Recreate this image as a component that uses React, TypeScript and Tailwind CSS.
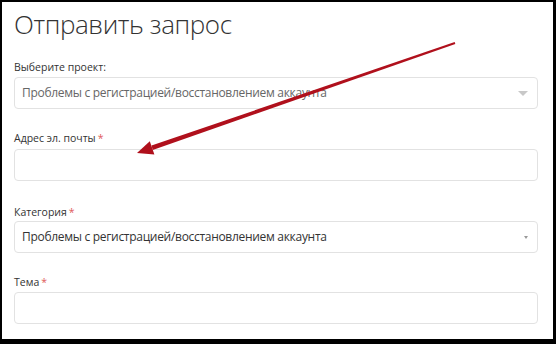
import React from "react"

const font = { fontFamily: '"Open Sans", "Noto Sans", sans-serif' }

function Label({ text, required }: { text: string; required?: boolean }) {
  return (
    <div className="text-[10.5px] leading-4 text-[#333]">
      {text}
      {required && <span className="ml-[2px] text-[#e05a5a]">*</span>}
    </div>
  )
}

function Select({ value, dark, small }: { value: string; dark?: boolean; small?: boolean }) {
  return (
    <div className="flex h-8 items-center justify-between rounded-[4px] border border-[#e2e2e2] bg-white pl-[7px] pr-[9px]">
      <span
        className={
          dark
            ? "text-[12px] tracking-[-0.3px] text-[#333]"
            : "text-[12px] tracking-[-0.3px] text-[#666]"
        }
      >
        {value}
      </span>
      {small ? (
        <span className="h-0 w-0 border-x-[2.5px] border-t-[3px] border-x-transparent border-t-[#999]" />
      ) : (
        <span className="h-0 w-0 border-x-[5px] border-t-[5px] border-x-transparent border-t-[#c8c8c8]" />
      )}
    </div>
  )
}

function Input() {
  return <div className="h-8 rounded-[4px] border border-[#e2e2e2] bg-white" />
}

export default function App() {
  return (
    <div className="h-[344px] w-[556px] bg-black pb-[5px] pl-[2px] pr-[3px] pt-[2px]" style={font}>
      <div className="relative h-full w-full overflow-hidden bg-white pl-3 pr-[15px]">
        <h1 className="pt-[3px] text-[26px] font-light leading-[38px] tracking-[-0.4px] text-[#333]">
          Отправить запрос
        </h1>
        <div className="mt-[16px]">
          <Label text="Выберите проект:" />
          <div className="mt-[2px]">
            <Select value="Проблемы с регистрацией/восстановлением аккаунта" />
          </div>
        </div>
        <div className="mt-[21px]">
          <Label text="Адрес эл. почты" required />
          <div className="mt-[3px]">
            <Input />
          </div>
        </div>
        <div className="mt-[23px]">
          <Label text="Категория" required />
          <div className="mt-[1px]">
            <Select value="Проблемы с регистрацией/восстановлением аккаунта" dark small />
          </div>
        </div>
        <div className="mt-[21px]">
          <Label text="Тема" required />
          <div className="mt-[2px]">
            <Input />
          </div>
        </div>

        <svg className="pointer-events-none absolute left-[-2px] top-[-2px]" width="556" height="344">
          <polygon points="455.3,44 454.7,42 151.5,145.6 152.7,150" fill="#b0101c" />
          <polygon points="137,153 149.8,141.2 154.4,154.4" fill="#b0101c" />
        </svg>
      </div>
    </div>
  )
}
